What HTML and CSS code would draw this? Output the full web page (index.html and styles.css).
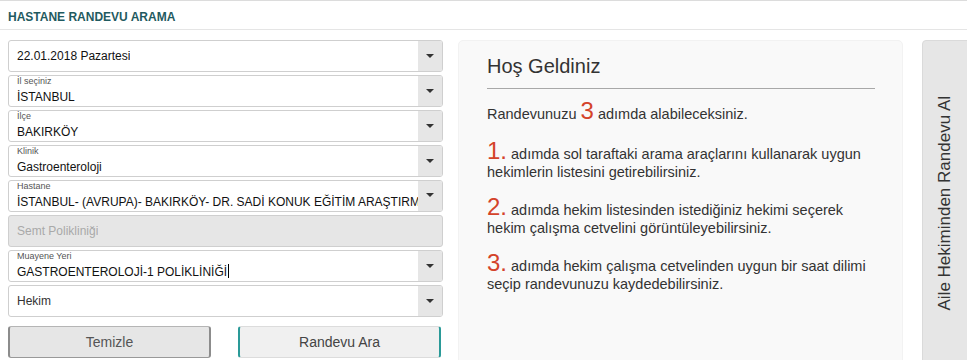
FILE: index.html
```html
<!DOCTYPE html>
<html lang="tr">
<head>
<meta charset="utf-8">
<title>Hastane Randevu Arama</title>
<link rel="stylesheet" href="styles.css">
</head>
<body>
<header class="page-head">HASTANE RANDEVU ARAMA</header>
<main class="main">
  <section class="form">
    <div class="field">
      <div class="field-body"><span class="value">22.01.2018 Pazartesi</span></div>
      <div class="arrow"><span class="tri"></span></div>
    </div>
    <div class="field">
      <div class="field-body labeled"><span class="label">İl seçiniz</span><span class="value">İSTANBUL</span></div>
      <div class="arrow"><span class="tri"></span></div>
    </div>
    <div class="field">
      <div class="field-body labeled"><span class="label">İlçe</span><span class="value">BAKIRKÖY</span></div>
      <div class="arrow"><span class="tri"></span></div>
    </div>
    <div class="field">
      <div class="field-body labeled"><span class="label">Klinik</span><span class="value">Gastroenteroloji</span></div>
      <div class="arrow"><span class="tri"></span></div>
    </div>
    <div class="field">
      <div class="field-body labeled"><span class="label">Hastane</span><span class="value">İSTANBUL- (AVRUPA)- BAKIRKÖY- DR. SADİ KONUK EĞİTİM ARAŞTIRMA VE UYGULAMA HASTANESİ</span></div>
      <div class="arrow arrow-high"><span class="tri"></span></div>
    </div>
    <div class="field disabled">
      <div class="field-body"><span class="value">Semt Polikliniği</span></div>
    </div>
    <div class="field">
      <div class="field-body labeled"><span class="label">Muayene Yeri</span><span class="value">GASTROENTEROLOJİ-1 POLİKLİNİĞİ<span class="caret"></span></span></div>
      <div class="arrow"><span class="tri"></span></div>
    </div>
    <div class="field">
      <div class="field-body"><span class="value placeholder">Hekim</span></div>
      <div class="arrow"><span class="tri"></span></div>
    </div>
    <div class="buttons">
      <button class="btn btn-clear" type="button">Temizle</button>
      <button class="btn btn-search" type="button">Randevu Ara</button>
    </div>
  </section>
  <section class="panel">
    <h2 class="panel-title">Hoş Geldiniz</h2>
    <p class="step intro">Randevunuzu <span class="big">3</span> adımda alabileceksiniz.</p>
    <p class="step"><span class="big">1.</span> adımda sol taraftaki arama araçlarını kullanarak uygun hekimlerin listesini getirebilirsiniz.</p>
    <p class="step"><span class="big">2.</span> adımda hekim listesinden istediğiniz hekimi seçerek hekim çalışma cetvelini görüntüleyebilirsiniz.</p>
    <p class="step"><span class="big">3.</span> adımda hekim çalışma cetvelinden uygun bir saat dilimi seçip randevunuzu kaydedebilirsiniz.</p>
  </section>
  <aside class="tab"><span class="tab-text">Aile Hekiminden Randevu Al</span></aside>
</main>
</body>
</html>
```
FILE: styles.css
```css
* { box-sizing: border-box; }
html, body { margin: 0; padding: 0; }
body {
  font-family: "Liberation Sans", Arial, sans-serif;
  color: #333;
  background: #fff;
  width: 967px;
  height: 360px;
  overflow: hidden;
}
.page-head {
  border-top: 1px solid #dcdcdc;
  border-bottom: 1px solid #e5e5e5;
  padding: 4px 8px 0;
  height: 30px;
  line-height: 24px;
  font-size: 12px;
  font-weight: bold;
  color: #1f5a60;
}
.main {
  display: flex;
  padding: 10px 0 0 8px;
  height: 340px;
}
.form {
  width: 435px;
  flex: 0 0 435px;
  display: flex;
  flex-direction: column;
  gap: 3px;
}
.field {
  height: 32px;
  border: 1px solid #cfcfcf;
  border-radius: 3px;
  display: flex;
  background: #fff;
  overflow: hidden;
}
.field-body {
  flex: 1;
  min-width: 0;
  display: flex;
  align-items: center;
  padding: 0 0 0 8px;
}
.field-body.labeled {
  flex-direction: column;
  align-items: stretch;
  justify-content: flex-start;
}
.label {
  font-size: 9px;
  line-height: 11px;
  color: #555;
  margin-bottom: 2px;
}
.value {
  font-size: 12px;
  line-height: 16px;
  color: #111;
  white-space: nowrap;
  overflow: hidden;
}
.placeholder { color: #333; }
.caret {
  display: inline-block;
  width: 1px;
  height: 14px;
  background: #000;
  vertical-align: -2px;
  margin-left: 1px;
}
.arrow {
  flex: 0 0 24px;
  background: #e6e6e6;
  display: flex;
  align-items: center;
  justify-content: center;
}
.arrow-high { align-items: flex-start; padding-top: 12px; }
.tri {
  width: 0;
  height: 0;
  border-left: 4px solid transparent;
  border-right: 4px solid transparent;
  border-top: 4px solid #333;
}
.disabled { background: #e6e6e6; }
.disabled .value { color: #a9a9a9; }
.buttons {
  margin-top: 6px;
  display: grid;
  grid-template-columns: 203px 203px;
  column-gap: 27px;
}
.btn {
  height: 32px;
  font-family: "Liberation Sans", Arial, sans-serif;
  font-size: 14px;
  border-radius: 3px;
  padding: 0;
}
.btn-clear {
  background: #e6e6e6;
  color: #555;
  border: 1px solid #b5b5b5;
  border-left: 2px solid #8c8c8c;
  border-right: 2px solid #8c8c8c;
  border-bottom-color: #999;
}
.btn-search {
  background: #f0f0f0;
  color: #444;
  border: 1px solid #dcdcdc;
  border-left: 2px solid #2a9a98;
  border-right: 2px solid #2a9a98;
}
.panel {
  flex: 0 0 445px;
  margin-left: 15px;
  background: #f9f9f9;
  border: 1px solid #f2f2f2;
  border-radius: 5px 5px 0 0;
  padding: 13px 27px 0 28px;
}
.panel-title {
  margin: 0 0 16px;
  font-size: 20px;
  font-weight: normal;
  line-height: 24px;
  padding-bottom: 10px;
  border-bottom: 1px solid #a8a8a8;
  color: #333;
}
.step {
  margin: 0 0 20px;
  font-size: 14.5px;
  line-height: 18px;
  color: #333;
}
.step.intro { margin-bottom: 22px; }
.big {
  font-size: 24px;
  line-height: 0;
  color: #d4432a;
}
.tab {
  flex: 0 0 46px;
  margin-left: 19px;
  background: #e6e6e6;
  border: 1px solid #dadada;
  border-radius: 4px 0 0 0;
  display: flex;
  align-items: center;
  justify-content: center;
}
.tab-text {
  writing-mode: vertical-rl;
  transform: rotate(180deg);
  font-size: 17px;
  color: #333;
  white-space: nowrap;
  margin-top: -4px;
}
```
